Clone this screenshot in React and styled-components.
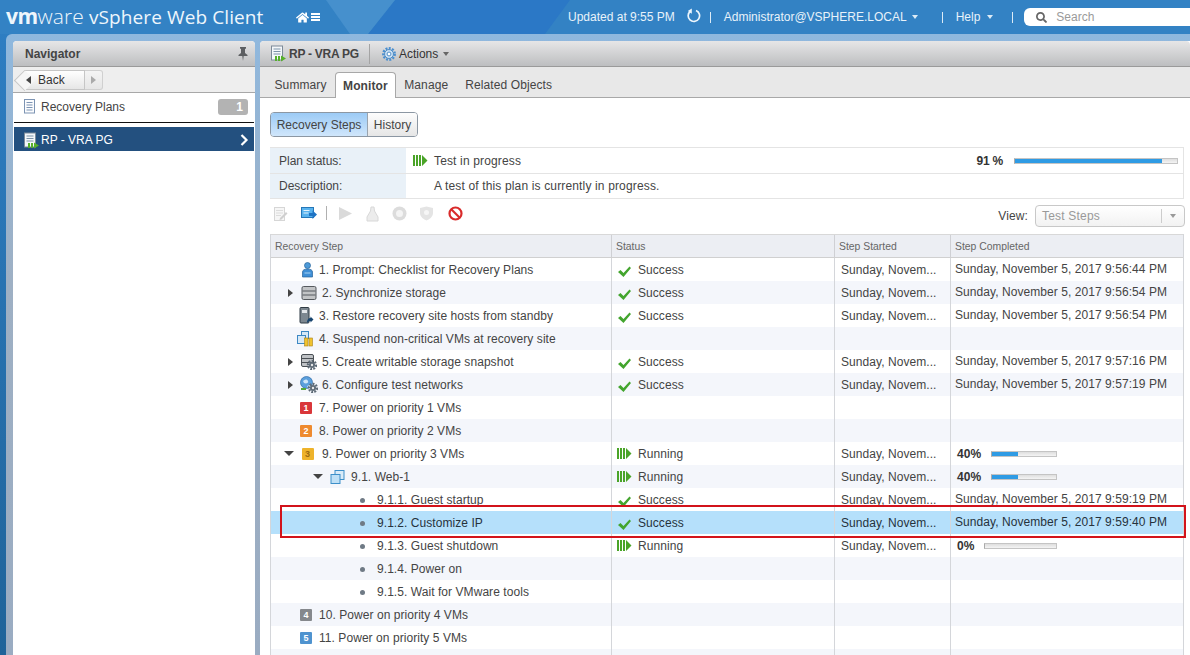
import React from 'react'
import styled, {createGlobalStyle} from 'styled-components'
import {FaHome, FaSearch} from 'react-icons/fa'

const GlobalStyle = createGlobalStyle`
  html, body {
    margin: 0;
    padding: 0;
    background: #fff;
    overflow: hidden;
  }
  * { box-sizing: border-box; }
`;

const Page = styled.div`
  width: 1190px;
  height: 655px;
  overflow: hidden;
  position: relative;
  display: flex;
  flex-direction: column;
  font-family: "Liberation Sans", Arial, sans-serif;
  font-size: 12px;
  color: #333;
  background: linear-gradient(180deg, #2f7fc4 0%, #1f6399 100%);
`;

//top bar
const TopBar = styled.div`
  height: 34px;
  flex: none;
  display: flex;
  align-items: center;
  color: #fff;
  padding-left: 6px;
  position: relative;
  isolation: isolate;
  background: #3382c4;
  &::before {
    content: "";
    position: absolute;
    inset: 0;
    z-index: -1;
    background: #2b78c6;
    clip-path: polygon(395px 0, 570px 0, 545px 34px, 368px 34px);
  }
  &::after {
    content: "";
    position: absolute;
    inset: 0;
    z-index: -1;
    background: #4690cd;
    clip-path: polygon(326px 0, 395px 0, 368px 34px, 350px 34px);
  }
`;

const Logo = styled.div`
  font-size: 19px;
  letter-spacing: .1px;
  white-space: nowrap;
  width: 290px;
  flex: none;
  color: #eef6fc;
  font-family: "Open Sans", "Liberation Sans", sans-serif;
  position: relative;
  top: -1px;
`;

const LogoVm = styled.span`
  font-size: 21px;
  font-weight: 700;
  letter-spacing: -.5px;
`;

const LogoWare = styled.span`
  font-size: 21px;
  font-weight: 300;
  margin-right: 5px;
`;

const HomeMenu = styled.div`
  display: flex;
  align-items: center;
  gap: 2px;
  width: 272px;
  flex: none;
`;

const HamLines = styled.div`
  width: 9px;
  height: 8px;
  border-top: 2px solid #fff;
  border-bottom: 2px solid #fff;
  position: relative;
  &::after {
    content: "";
    position: absolute;
    left: 0;
    right: 0;
    top: 1px;
    height: 2px;
    background: #fff;
  }
`;

const TopText = styled.span`
  color: #e8f2fa;
  font-size: 12px;
  white-space: nowrap;
  flex: none;
  margin-left: ${(p) => p.$ml || 0}px;
`;

const TopSep = styled.span`
  width: 1px;
  height: 11px;
  flex: none;
  background: #dcebf6;
  margin-left: ${(p) => p.$ml}px;
`;

const Caret = styled.span`
  display: inline-block;
  border-left: 3.5px solid transparent;
  border-right: 3.5px solid transparent;
  border-top: 4px solid ${(p) => p.$color || '#dcebf6'};
  margin-left: ${(p) => p.$ml ?? 5}px;
  vertical-align: 2px;
`;

const SearchBox = styled.div`
  flex: 1;
  height: 18px;
  margin-left: 11px;
  background: #fff;
  border-radius: 6px 0 0 6px;
  display: flex;
  align-items: center;
  padding-left: 12px;
  color: #9a9a9a;
  gap: 9px;
`;

//panels
const Shell = styled.div`
  flex: 1;
  min-height: 0;
  margin-left: 6px;
  padding: 7px 0 0 7px;
  display: flex;
  gap: 5px;
  border-radius: 6px 0 0 0;
  background: linear-gradient(180deg, #8fb8de 0%, #9eb0c4 40%, #9aacc2 100%);
`;

const Navigator = styled.div`
  width: 242px;
  flex: none;
  background: #fff;
  border-radius: 4px 4px 0 0;
  display: flex;
  flex-direction: column;
`;

const PanelHead = styled.div`
  height: 26px;
  flex: none;
  display: flex;
  align-items: center;
  padding: 0 7px 0 12px;
  justify-content: space-between;
  border-radius: 4px 4px 0 0;
  border-bottom: 1px solid #9a9a9a;
  background: linear-gradient(180deg, #e6e6e7 0%, #bdbec0 100%);
  font-weight: 700;
  color: #444;
`;

const BackRow = styled.div`
  height: 26px;
  flex: none;
  background: #eeeeee;
  border-bottom: 1px solid #a8a8a8;
  display: flex;
  align-items: center;
  padding-left: 11px;
`;

const BackButton = styled.div`
  width: 61px;
  height: 20px;
  display: flex;
  align-items: center;
  gap: 7px;
  padding-left: 2px;
  font-size: 12px;
  color: #333;
  position: relative;
  background: linear-gradient(180deg, #fff, #e6e6e6);
  border: 1px solid #c6c6c6;
  border-left: none;
  &::before {
    content: "";
    position: absolute;
    left: -7px;
    top: 2px;
    width: 14px;
    height: 14px;
    transform: rotate(45deg);
    background: #f6f6f6;
    border-left: 1px solid #c6c6c6;
    border-bottom: 1px solid #c6c6c6;
  }
`;

const BackArrow = styled.span`
  position: relative;
  display: flex;
`;

const BackLabel = styled.span`
  position: relative;
`;

const ForwardButton = styled.div`
  width: 18px;
  height: 20px;
  display: flex;
  align-items: center;
  justify-content: center;
  background: linear-gradient(180deg, #f4f4f4, #e6e6e6);
  border: 1px solid #d0d0d0;
  border-left: none;
  border-radius: 0 3px 3px 0;
`;

const Arrow = styled.span`
  width: 0;
  height: 0;
  border-top: 4px solid transparent;
  border-bottom: 4px solid transparent;
  ${(p) => p.$left
    ? `border-right: 5px solid ${p.$color};`
    : `border-left: 5px solid ${p.$color};`}
`;

const NavItem = styled.div`
  height: 30px;
  flex: none;
  display: flex;
  align-items: center;
  padding: 0 6px 2px 9px;
  gap: 4px;
  color: #444;
  border-bottom: 1px solid #111;
  margin: 0 1px 4px 1px;
`;

const Badge = styled.span`
  margin-left: auto;
  width: 30px;
  height: 16px;
  border-radius: 3px;
  background: #b3b3b3;
  color: #fff;
  font-weight: 700;
  text-align: right;
  padding-right: 5px;
  line-height: 16px;
`;

const NavSelected = styled.div`
  height: 24px;
  flex: none;
  margin: 0 1px;
  background: #23507f;
  color: #fff;
  display: flex;
  align-items: center;
  padding: 2px 5px 0 9px;
  gap: 1px;
`;

const Main = styled.div`
  flex: 1;
  min-width: 0;
  background: #fff;
  border-radius: 4px 0 0 0;
  display: flex;
  flex-direction: column;
`;

const MainHead = styled(PanelHead)`
  justify-content: flex-start;
  padding: 0 0 0 10px;
  gap: 2px;
  font-weight: 700;
`;

const HeadTitle = styled.span`
  letter-spacing: -.25px;
`;

const HeadDivider = styled.span`
  width: 1px;
  height: 20px;
  background: #a4a4a4;
  margin: 0 9px 0 8px;
`;

const ActionsLabel = styled.span`
  font-weight: 400;
  color: #333;
`;

const TabRow = styled.div`
  height: 31px;
  flex: none;
  background: #e8e8e8;
  border-bottom: 1px solid #a8a8a8;
  display: flex;
  align-items: flex-end;
  padding-left: 6px;
  letter-spacing: .1px;
`;

const Tab = styled.div`
  height: 24px;
  padding: 0 8.5px;
  display: flex;
  align-items: center;
  color: #444;
  ${(p) => p.$active && `
    font-weight: 700;
    background: #fff;
    border: 1px solid #a8a8a8;
    border-bottom: none;
    border-radius: 4px 4px 0 0;
    margin-bottom: -1px;
    height: 26px;
    padding: 0 7px;
  `}
`;

const Content = styled.div`
  flex: 1;
  min-height: 0;
  padding: 14px 5px 0 10px;
  overflow: hidden;
`;

const ToggleGroup = styled.div`
  display: flex;
  width: 148px;
  height: 25px;
  border: 1px solid #8c97a3;
  border-radius: 4px;
  overflow: hidden;
`;

const ToggleBtn = styled.div`
  display: flex;
  align-items: center;
  justify-content: center;
  flex: ${(p) => (p.$active ? '0 0 97px' : 1)};
  color: #444;
  background: ${(p) => p.$active
    ? 'linear-gradient(180deg, #9ccbf6, #d0e6fb)'
    : 'linear-gradient(180deg, #fdfdfd, #e6e6e6)'};
  border-right: ${(p) => (p.$active ? '1px solid #9aa4ae' : 'none')};
`;

const PlanTable = styled.div`
  margin-top: 10px;
  width: 914px;
  border: 1px solid #e4e4e4;
  border-width: 1px 1px 1px 0;
  display: flex;
  flex-direction: column;
`;

const PlanRow = styled.div`
  height: 25px;
  display: flex;
  align-items: center;
  & + & {
    border-top: 1px solid #e4e4e4;
  }
`;

const PlanLabel = styled.div`
  width: 136px;
  height: 100%;
  flex: none;
  background: #e9f1f8;
  padding-left: 9px;
  display: flex;
  align-items: center;
  color: #444;
`;

const PlanValue = styled.div`
  flex: 1;
  display: flex;
  align-items: center;
  padding-left: 7px;
  color: #444;
  gap: 6px;
  letter-spacing: .15px;
`;

const IconSpacer = styled.span`
  width: 15px;
  flex: none;
`;

const PlanPercent = styled.b`
  margin-left: auto;
  margin-right: 5px;
  color: #333;
  letter-spacing: -.2px;
`;

const Bar = styled.div`
  width: ${(p) => p.$w}px;
  height: 6px;
  flex: none;
  margin-right: ${(p) => p.$mr || 0}px;
  background: linear-gradient(180deg, #dedede, #f4f4f4);
  border: 1px solid #c4c4c4;
  border-left-color: #aaa;
  overflow: hidden;
`;

const BarFill = styled.div`
  height: 100%;
  background: #2f9be4;
`;

const ActionBar = styled.div`
  height: 35px;
  display: flex;
  align-items: flex-start;
  padding: 7px 0 0 3px;
  gap: 12px;
`;

const BarSep = styled.span`
  width: 1px;
  height: 14px;
  background: #b0b0b0;
  margin: 0 -1px 0 -3px;
`;

const StopWrap = styled.span`
  display: flex;
  margin-left: 2px;
`;

const ViewBox = styled.div`
  margin-left: auto;
  margin-top: -1px;
  display: flex;
  align-items: center;
  gap: 7px;
  color: #444;
  letter-spacing: .1px;
`;

const ViewSelect = styled.div`
  width: 150px;
  height: 22px;
  border: 1px solid #c8c8c8;
  border-radius: 4px;
  display: flex;
  align-items: center;
  justify-content: space-between;
  padding-left: 6px;
  color: #999;
  letter-spacing: .2px;
  background: linear-gradient(180deg, #fff, #f2f2f2);
`;

const ViewCaret = styled.span`
  width: 23px;
  height: 14px;
  border-left: 1px solid #ccc;
  display: flex;
  align-items: center;
  justify-content: center;
`;

const Grid = styled.div`
  border-left: 1px solid #d4d6da;
  border-right: 1px solid #d4d6da;
  width: 914px;
`;

const gridCols = '340px 223px 116px 1fr';

const GridHead = styled.div`
  display: grid;
  grid-template-columns: ${gridCols};
  height: 24px;
  background: #eceef3;
  border-top: 1px solid #d8d8d8;
  border-bottom: 1px solid #d0d0d0;
  font-size: 10.4px;
  color: #666;
`;

const HeadCell = styled.div`
  display: flex;
  align-items: center;
  padding-left: 4px;
  border-left: ${(p) => (p.$first ? 'none' : '1px solid #cfd0d4')};
`;

const GridRow = styled.div`
  display: grid;
  grid-template-columns: ${gridCols};
  height: 23px;
  letter-spacing: .06px;
  background: ${(p) => (p.$selected ? '#b5e0fb' : p.$alt ? '#f4f6fb' : '#fff')};
  color: ${(p) => (p.$selected ? '#26323c' : '#444')};
`;

const Cell = styled.div`
  display: flex;
  align-items: center;
  padding-left: 6px;
  border-left: ${(p) => (p.$first ? 'none' : '1px solid #d4d6da')};
  white-space: nowrap;
  overflow: hidden;
`;

const StepCell = styled(Cell)`
  padding-left: ${(p) => p.$indent}px;
  gap: ${(p) => p.$gap || 5}px;
`;

const StatusCell = styled(Cell)`
  gap: 6px;
  padding-left: 5px;
`;

const DateCell = styled(Cell)`
  padding-bottom: 2px;
  padding-left: 4px;
`;

const ProgressCell = styled(Cell)`
  padding-left: 6px;
  font-weight: 700;
  color: #333;
  justify-content: space-between;
  padding-right: 126px;
`;

const Disclosure = styled.span`
  width: 12px;
  flex: none;
  display: flex;
  justify-content: center;
`;

const DownArrow = styled.span`
  border-left: 5px solid transparent;
  border-right: 5px solid transparent;
  border-top: 5px solid #444;
`;

const Dot = styled.span`
  width: 5px;
  height: 5px;
  flex: none;
  border-radius: 50%;
  background: #6f7a85;
  margin-right: 7px;
  margin-top: 2px;
`;

const PriorityBadge = styled.span`
  width: 12px;
  height: 12px;
  flex: none;
  border-radius: 1px;
  background: ${(p) => p.$bg};
  color: ${(p) => p.$fg || '#fff'};
  font-size: 9px;
  line-height: 12px;
  text-align: center;
  font-weight: 700;
  margin-right: 2px;
`;

// the red annotation drawn over the grid
const Highlight = styled.div`
  position: absolute;
  left: 280px;
  top: 505px;
  width: 906px;
  height: 33px;
  border: 2px solid #d2131b;
  pointer-events: none;
`;

const PlanIcon = ({running}) => (
    <svg width="17" height="17" viewBox="0 0 17 17">
        <rect x="1.5" y="1" width="11" height="14" fill="#f4f7fa" stroke="#7c8a98"/>
        <path d="M3.5 4h7M3.5 6.5h7M3.5 9h7" stroke="#7d93a8"/>
        {running && <path d="M5 11h2v5H5zM8 11h2v5H8zM11 10.5l5 3-5 3z" fill="#56b02a"/>}
    </svg>
)

const RunIcon = () => (
    <svg width="15" height="11" viewBox="0 0 15 11">
        <path d="M0 0h2v11H0zM3 0h2v11H3zM6 0h2v11H6zM9 0l5.5 5.5L9 11z" fill="#4aa428"/>
    </svg>
)

const CheckIcon = () => (
    <svg width="15" height="13" viewBox="0 0 15 13" style={{marginTop: 3}}>
        <path d="M1 7l2.5-2 3 3L12.5 1.5 14 3 6.5 12z" fill="#43a52e"/>
    </svg>
)

const PersonIcon = () => (
    <svg width="13" height="16" viewBox="0 0 13 16">
        <circle cx="6.5" cy="3.5" r="3" fill="#4d9ad8" stroke="#27639a" strokeWidth=".7"/>
        <path d="M1.5 15V10c0-2 2-3 5-3s5 1 5 3v5z" fill="#3f8fd6" stroke="#27639a" strokeWidth=".7"/>
        <path d="M3.5 11h6" stroke="#a9d3f3"/>
    </svg>
)

const StorageIcon = () => (
    <svg width="16" height="14" viewBox="0 0 15 14">
        <rect x=".5" y=".5" width="14" height="13" rx="1.5" fill="#c2c4c6" stroke="#55595e"/>
        <path d="M1 5h13M1 9h13" stroke="#55595e"/>
    </svg>
)

const HostIcon = () => (
    <svg width="15" height="17" viewBox="0 0 15 17">
        <rect x="1" y=".5" width="9" height="15.5" rx="1" fill="#7c8790" stroke="#2f3a44"/>
        <rect x="3" y="3" width="5" height="3" fill="#e2e6ea"/>
        <path d="M8 16c0-4 2-5 3.5-5V9.5l3 3-3 3V14c-1 0-2 .5-3.5 2z" fill="#17446e"/>
    </svg>
)

const SuspendIcon = () => (
    <svg width="18" height="17" viewBox="0 0 18 17">
        <rect x="5.5" y="1.5" width="7" height="7" fill="#d7e9f7" stroke="#3d88c4"/>
        <rect x="1.5" y="5.5" width="8" height="8" fill="#d7e9f7" stroke="#3d88c4"/>
        <rect x="8.5" y="8" width="3.5" height="8" fill="#efc22f" stroke="#a8801a" strokeWidth=".6"/>
        <rect x="13" y="8" width="3.5" height="8" fill="#efc22f" stroke="#a8801a" strokeWidth=".6"/>
    </svg>
)

const Gear = ({x, y, r = 4, color = '#5d6a76'}) => (
    <g>
        <circle cx={x} cy={y} r={r} fill="none" stroke={color} strokeWidth="2.4" strokeDasharray="1.8 1.2"/>
        <circle cx={x} cy={y} r={r - 1} fill={color}/>
        <circle cx={x} cy={y} r={1.2} fill="#e8e8e8"/>
    </g>
)

const SnapshotIcon = () => (
    <svg width="16" height="16" viewBox="0 0 16 16">
        <rect x=".5" y=".5" width="12" height="12" rx="1.5" fill="#bfc2c5" stroke="#4a4f54"/>
        <path d="M1 4.5h11M1 8.5h11" stroke="#4a4f54"/>
        <Gear x={11} y={11}/>
    </svg>
)

const NetworkIcon = () => (
    <svg width="18" height="17" viewBox="0 0 18 17">
        <circle cx="6.5" cy="6.5" r="6" fill="#5b9fdc" stroke="#2f6ca6" strokeWidth=".7"/>
        <path d="M3 5c2-2 4-2 5 0s-2 3-4 2zM7 10l3-1 1 2-3 1z" fill="#cfe6f8"/>
        <path d="M1 13h5" stroke="#55a83a" strokeWidth="2"/>
        <Gear x={13} y={12}/>
    </svg>
)

const VmGroupIcon = () => (
    <svg width="15" height="14" viewBox="0 0 15 14">
        <rect x="5" y=".5" width="9" height="9" fill="#d9ebf8" stroke="#3d8fc9"/>
        <rect x="1" y="4.5" width="9" height="9" fill="#bfe0f6" stroke="#3d8fc9"/>
    </svg>
)

const GearBlueIcon = () => (
    <svg width="16" height="16" viewBox="0 0 18 18">
        <circle cx="9" cy="9" r="6.5" fill="none" stroke="#4a8fd0" strokeWidth="2.6" strokeDasharray="2.2 1.5"/>
        <circle cx="9" cy="9" r="5" fill="#cfe3f5" stroke="#3b7fbf"/>
        <circle cx="9" cy="9" r="2.2" fill="#fff" stroke="#3b7fbf"/>
    </svg>
)

const ListIcon = () => (
    <svg width="14" height="15" viewBox="0 0 14 15">
        <rect x="1.5" y=".5" width="10" height="13.5" fill="#fbfcfe" stroke="#7d94b3"/>
        <path d="M3.5 3.5h6M3.5 6h6M3.5 8.5h6M3.5 11h6" stroke="#7d94b3"/>
    </svg>
)

const PinIcon = () => (
    <svg width="10" height="14" viewBox="0 0 10 14">
        <path d="M2 0h6v1.5L7 2v4l2.5 2v1H5.7L5 14l-.7-5H.5V8L3 6V2l-1-.5z" fill="#5d5f62"/>
    </svg>
)

const RefreshIcon = () => (
    <svg width="15" height="15" viewBox="0 0 15 15">
        <path d="M4.5 3.2A5.7 5.7 0 1 0 10 2.5" fill="none" stroke="#eef6fc" strokeWidth="1.7"/>
        <path d="M5.8 .5v5.2L1.8 3z" fill="#eef6fc"/>
    </svg>
)

const EditIcon = () => (
    <svg width="16" height="16" viewBox="0 0 16 16">
        <rect x="1.5" y="1.5" width="10" height="13" fill="#f6f6f6" stroke="#d6d6d6"/>
        <path d="M3 4.5h7M3 7h7M3 9.5h5" stroke="#dcdcdc"/>
        <path d="M7 12l6-6 1.5 1.5-6 6-2 .5z" fill="#cfcfcf"/>
    </svg>
)

const ExportIcon = () => (
    <svg width="16" height="14" viewBox="0 0 16 14">
        <rect x=".5" y="1.5" width="12" height="10" fill="#59b3ee" stroke="#2577b8"/>
        <path d="M2.5 4.5h6M2.5 7h5" stroke="#e6f4fd"/>
        <path d="M8 7h3.5V4.5L16 8.5 11.5 13v-3H8z" fill="#1f74c4"/>
    </svg>
)

const PlayIcon = () => (
    <svg width="15" height="15" viewBox="0 0 15 15">
        <path d="M1 1l13 6.5L1 14z" fill="#dadada"/>
    </svg>
)

const ClearIcon = () => (
    <svg width="15" height="16" viewBox="0 0 15 16">
        <path d="M6 1h3l.5 4 3.5 6v4H2v-4l3.5-6z" fill="#ececec" stroke="#d8d8d8"/>
    </svg>
)

const RoundIcon = () => (
    <svg width="15" height="15" viewBox="0 0 15 15">
        <circle cx="7.5" cy="7.5" r="7" fill="#dcdcdc"/>
        <circle cx="7.5" cy="7.5" r="3.5" fill="#f4f4f4"/>
    </svg>
)

const ShieldIcon = () => (
    <svg width="15" height="15" viewBox="0 0 15 15">
        <path d="M1 2l6.5-1.5L14 2v5c0 4-4 6.5-6.5 7.5C5 13.5 1 11 1 7z" fill="#e4e4e4"/>
        <circle cx="7.5" cy="6.5" r="2.5" fill="#f6f6f6"/>
    </svg>
)

const StopIcon = () => (
    <svg width="15" height="15" viewBox="0 0 15 15">
        <circle cx="7.5" cy="7.5" r="6" fill="#fff" stroke="#d92b2b" strokeWidth="2.2"/>
        <path d="M3.5 3.5l8 8" stroke="#d92b2b" strokeWidth="2.2"/>
    </svg>
)

const priorities = {
    1: {bg: '#d9363a'},
    2: {bg: '#ee8a2f'},
    3: {bg: '#eeb32b', fg: '#9a6a12'},
    4: {bg: '#85888c'},
    5: {bg: '#4f93cf'},
}

const priorityIcon = (n) => <PriorityBadge $bg={priorities[n].bg} $fg={priorities[n].fg}>{n}</PriorityBadge>

const SUNDAY = 'Sunday, Novem...'
const day = (t) => `Sunday, November 5, 2017 ${t} PM`

const rows = [
    {text: '1. Prompt: Checklist for Recovery Plans', indent: 30, icon: <PersonIcon/>, status: 'ok', started: SUNDAY, done: day('9:56:44')},
    {text: '2. Synchronize storage', indent: 13, toggle: 'right', icon: <StorageIcon/>, status: 'ok', started: SUNDAY, done: day('9:56:54')},
    {text: '3. Restore recovery site hosts from standby', indent: 28, icon: <HostIcon/>, status: 'ok', started: SUNDAY, done: day('9:56:54')},
    {text: '4. Suspend non-critical VMs at recovery site', indent: 25, icon: <SuspendIcon/>},
    {text: '5. Create writable storage snapshot', indent: 13, toggle: 'right', icon: <SnapshotIcon/>, status: 'ok', started: SUNDAY, done: day('9:57:16')},
    {text: '6. Configure test networks', indent: 13, toggle: 'right', icon: <NetworkIcon/>, gap: 4, status: 'ok', started: SUNDAY, done: day('9:57:19')},
    {text: '7. Power on priority 1 VMs', indent: 29, icon: priorityIcon(1)},
    {text: '8. Power on priority 2 VMs', indent: 29, icon: priorityIcon(2)},
    {text: '9. Power on priority 3 VMs', indent: 12, toggle: 'down', icon: priorityIcon(3), gap: 6.5, status: 'run', started: SUNDAY, pct: 40, barW: 66},
    {text: '9.1. Web-1', indent: 41, toggle: 'down', icon: <VmGroupIcon/>, status: 'run', started: SUNDAY, pct: 40, barW: 66, gap: 6},
    {text: '9.1.1. Guest startup', indent: 89, dot: true, status: 'ok', started: SUNDAY, done: day('9:59:19')},
    {text: '9.1.2. Customize IP', indent: 89, dot: true, status: 'ok', started: SUNDAY, done: day('9:59:40'), selected: true},
    {text: '9.1.3. Guest shutdown', indent: 89, dot: true, status: 'run', started: SUNDAY, pct: 0, barW: 73},
    {text: '9.1.4. Power on', indent: 89, dot: true},
    {text: '9.1.5. Wait for VMware tools', indent: 89, dot: true},
    {text: '10. Power on priority 4 VMs', indent: 29, icon: priorityIcon(4)},
    {text: '11. Power on priority 5 VMs', indent: 29, icon: priorityIcon(5)},
    {text: ''},
]

const StepRow = ({row, index}) => (
    <GridRow $alt={index % 2 === 1} $selected={row.selected}>
        <StepCell $first $indent={row.indent || 0} $gap={row.gap}>
            {row.toggle === 'right' && <Disclosure><Arrow $color="#444"/></Disclosure>}
            {row.toggle === 'down' && <Disclosure><DownArrow/></Disclosure>}
            {row.dot && <Dot/>}
            {row.icon}
            <span>{row.text}</span>
        </StepCell>
        <StatusCell>
            {row.status === 'ok' && <><CheckIcon/><span>Success</span></>}
            {row.status === 'run' && <><RunIcon/><span>Running</span></>}
        </StatusCell>
        <Cell>{row.started}</Cell>
        {row.pct !== undefined
            ? <ProgressCell>
                <span>{row.pct}%</span>
                <Bar $w={row.barW}><BarFill style={{width: `${row.pct}%`}}/></Bar>
            </ProgressCell>
            : <DateCell>{row.done}</DateCell>}
    </GridRow>
)

const App = () => {
    return (
        <Page>
            <GlobalStyle/>
            <TopBar>
                <Logo>
                    <LogoVm>vm</LogoVm><LogoWare>ware</LogoWare>vSphere Web Client
                </Logo>
                <HomeMenu>
                    <FaHome size={13} color="#fff"/>
                    <HamLines/>
                </HomeMenu>
                <TopText>Updated at 9:55 PM</TopText>
                <TopText $ml={11}><RefreshIcon/></TopText>
                <TopSep $ml={9}/>
                <TopText $ml={13}>Administrator@VSPHERE.LOCAL<Caret/></TopText>
                <TopSep $ml={24}/>
                <TopText $ml={13}>Help<Caret $ml={7}/></TopText>
                <TopSep $ml={19}/>
                <SearchBox>
                    <FaSearch size={11} color="#666"/>
                    <span>Search</span>
                </SearchBox>
            </TopBar>
            <Shell>
                <Navigator>
                    <PanelHead>
                        <span>Navigator</span>
                        <PinIcon/>
                    </PanelHead>
                    <BackRow>
                        <BackButton>
                            <BackArrow><Arrow $left $color="#444"/></BackArrow>
                            <BackLabel>Back</BackLabel>
                        </BackButton>
                        <ForwardButton><Arrow $color="#aaa"/></ForwardButton>
                    </BackRow>
                    <NavItem>
                        <ListIcon/>
                        <span>Recovery Plans</span>
                        <Badge>1</Badge>
                    </NavItem>
                    <NavSelected>
                        <PlanIcon running/>
                        <span>RP - VRA PG</span>
                        <svg width="9" height="12" viewBox="0 0 9 12" style={{marginLeft: 'auto'}}>
                            <path d="M1.5 1l5 5-5 5" fill="none" stroke="#fff" strokeWidth="2.2"/>
                        </svg>
                    </NavSelected>
                </Navigator>
                <Main>
                    <MainHead>
                        <PlanIcon running/>
                        <HeadTitle>RP - VRA PG</HeadTitle>
                        <HeadDivider/>
                        <GearBlueIcon/>
                        <ActionsLabel>Actions<Caret $color="#666"/></ActionsLabel>
                    </MainHead>
                    <TabRow>
                        <Tab>Summary</Tab>
                        <Tab $active>Monitor</Tab>
                        <Tab>Manage</Tab>
                        <Tab>Related Objects</Tab>
                    </TabRow>
                    <Content>
                        <ToggleGroup>
                            <ToggleBtn $active>Recovery Steps</ToggleBtn>
                            <ToggleBtn>History</ToggleBtn>
                        </ToggleGroup>
                        <PlanTable>
                            <PlanRow>
                                <PlanLabel>Plan status:</PlanLabel>
                                <PlanValue>
                                    <RunIcon/>
                                    <span>Test in progress</span>
                                    <PlanPercent>91 %</PlanPercent>
                                    <Bar $w={164} $mr={5}><BarFill style={{width: '91%'}}/></Bar>
                                </PlanValue>
                            </PlanRow>
                            <PlanRow>
                                <PlanLabel>Description:</PlanLabel>
                                <PlanValue>
                                    <IconSpacer/>
                                    <span>A test of this plan is currently in progress.</span>
                                </PlanValue>
                            </PlanRow>
                        </PlanTable>
                        <ActionBar>
                            <EditIcon/>
                            <ExportIcon/>
                            <BarSep/>
                            <PlayIcon/>
                            <ClearIcon/>
                            <RoundIcon/>
                            <ShieldIcon/>
                            <StopWrap><StopIcon/></StopWrap>
                            <ViewBox>
                                View:
                                <ViewSelect>
                                    Test Steps
                                    <ViewCaret><Caret $color="#999" $ml={0}/></ViewCaret>
                                </ViewSelect>
                            </ViewBox>
                        </ActionBar>
                        <Grid>
                            <GridHead>
                                <HeadCell $first>Recovery Step</HeadCell>
                                <HeadCell>Status</HeadCell>
                                <HeadCell>Step Started</HeadCell>
                                <HeadCell>Step Completed</HeadCell>
                            </GridHead>
                            {rows.map((row, i) => <StepRow key={i} row={row} index={i}/>)}
                        </Grid>
                    </Content>
                </Main>
            </Shell>
            <Highlight/>
        </Page>
    )
}

export default App
